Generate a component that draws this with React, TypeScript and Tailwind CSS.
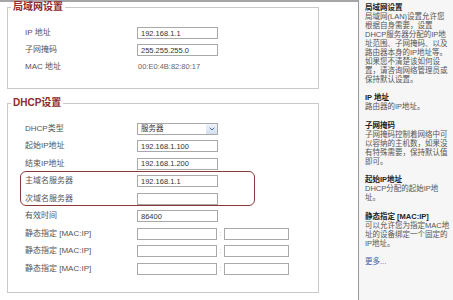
import { ChevronDown } from 'lucide-react';
import type { ReactNode } from 'react';

const font = { fontFamily: '"Liberation Sans", "Noto Sans CJK SC", sans-serif' };

function Row({ label, h, children }: { label: string; h: string; children?: ReactNode }) {
  return (
    <div className={`flex items-center pl-[17px] ${h}`}>
      <span className="w-[112px] shrink-0 whitespace-nowrap text-[8px] text-[#555]">{label}</span>
      {children}
    </div>
  );
}

function Field({ value = '', w = 'w-[81px]' }: { value?: string; w?: string }) {
  return (
    <input
      readOnly
      value={value}
      className={`h-[12px] ${w} border border-[#a9a9a9] bg-white px-[3px] text-[7.5px] text-[#333] outline-none`}
    />
  );
}

function StaticRow() {
  return (
    <Row label="静态指定 [MAC:IP]" h="h-[17.5px]">
      <Field w="w-[80px]" />
      <span className="w-[7px] text-center text-[7px] text-[#aaa]">:</span>
      <Field w="w-[65px]" />
    </Row>
  );
}

const help: { title: string; lines: string[] }[] = [
  {
    title: '局域网设置',
    lines: [
      '局域网(LAN)设置允许您',
      '根据自身需要，设置',
      'DHCP服务器分配的IP地',
      '址范围、子网掩码、以及',
      '路由器本身的IP地址等。',
      '如果您不清楚该如何设',
      '置，请咨询网络管理员或',
      '保持默认设置。',
    ],
  },
  { title: 'IP 地址', lines: ['路由器的IP地址。'] },
  {
    title: '子网掩码',
    lines: ['子网掩码控制着网络中可', '以容纳的主机数，如果没', '有特殊需要，保持默认值', '即可。'],
  },
  { title: '起始IP地址', lines: ['DHCP分配的起始IP地', '址。'] },
  {
    title: '静态指定 [MAC:IP]',
    lines: ['可以允许您为指定MAC地', '址的设备绑定一个固定的', 'IP地址。'],
  },
];

export default function App() {
  return (
    <div className="flex h-[300px] w-[453px] overflow-hidden bg-white" style={font}>
      <div className="w-[358px] shrink-0 border-t-2 border-[#a6a6a6]">
        <fieldset className="ml-[7px] w-[312px] border border-[#c9c9c9] pt-[12.5px] pb-[12.5px]">
          <legend className="ml-[3px] px-[2px] text-[10px] font-bold leading-[10px] text-[#8e2b2b]">局域网设置</legend>
          <Row label="IP 地址" h="h-[17px]">
            <Field value="192.168.1.1" />
          </Row>
          <Row label="子网掩码" h="h-[17px]">
            <Field value="255.255.255.0" />
          </Row>
          <Row label="MAC 地址" h="h-[17px]">
            <span className="pl-[1px] text-[7.5px] text-[#666]">00:E0:4B:82:80:17</span>
          </Row>
        </fieldset>

        <fieldset className="mt-[9px] ml-[7px] w-[312px] border border-[#c9c9c9] pt-[12px] pb-[14px]">
          <legend className="ml-[3px] px-[2px] text-[10px] font-bold leading-[10px] text-[#8e2b2b]">DHCP设置</legend>
          <Row label="DHCP类型" h="h-[17.5px]">
            <div className="flex h-[12px] w-[81px] items-center border border-[#a9a9a9] bg-white">
              <span className="flex-1 pl-[3px] text-[7.5px] text-[#333]">服务器</span>
              <span className="flex h-full w-[11px] items-center justify-center bg-gradient-to-b from-[#eef3fb] to-[#d3dff0]">
                <ChevronDown size={8} strokeWidth={3} className="text-[#4b6a98]" />
              </span>
            </div>
          </Row>
          <Row label="起始IP地址" h="h-[17.5px]">
            <Field value="192.168.1.100" />
          </Row>
          <Row label="结束IP地址" h="h-[17.5px]">
            <Field value="192.168.1.200" />
          </Row>
          <div className="relative">
            <Row label="主域名服务器" h="h-[17.5px]">
              <Field value="192.168.1.1" />
            </Row>
            <Row label="次域名服务器" h="h-[17.5px]">
              <Field />
            </Row>
            {/* annotation box drawn over the two DNS rows */}
            <span className="pointer-events-none absolute top-[-2px] left-[12px] h-[35px] w-[235px] rounded-[6px] border-[1.5px] border-[#8b3a3a]" />
          </div>
          <Row label="有效时间" h="h-[17.5px]">
            <Field value="86400" />
          </Row>
          <StaticRow />
          <StaticRow />
          <StaticRow />
        </fieldset>
      </div>

      <aside className="flex-1 border-l border-[#9a9a9a] bg-[#f6f6f6] pt-[2.5px] pl-[6px] text-[7.5px] leading-[9px]">
        {help.map((s, i) => (
          <div key={s.title} className={i === 0 ? '' : 'mt-[9.5px]'}>
            <div className="whitespace-nowrap font-bold text-[#222]">{s.title}</div>
            {s.lines.map((l) => (
              <div key={l} className="whitespace-nowrap text-[#555]">
                {l}
              </div>
            ))}
          </div>
        ))}
        <div className="mt-[9.5px] text-[#3b5fa6]">更多...</div>
      </aside>
    </div>
  );
}
